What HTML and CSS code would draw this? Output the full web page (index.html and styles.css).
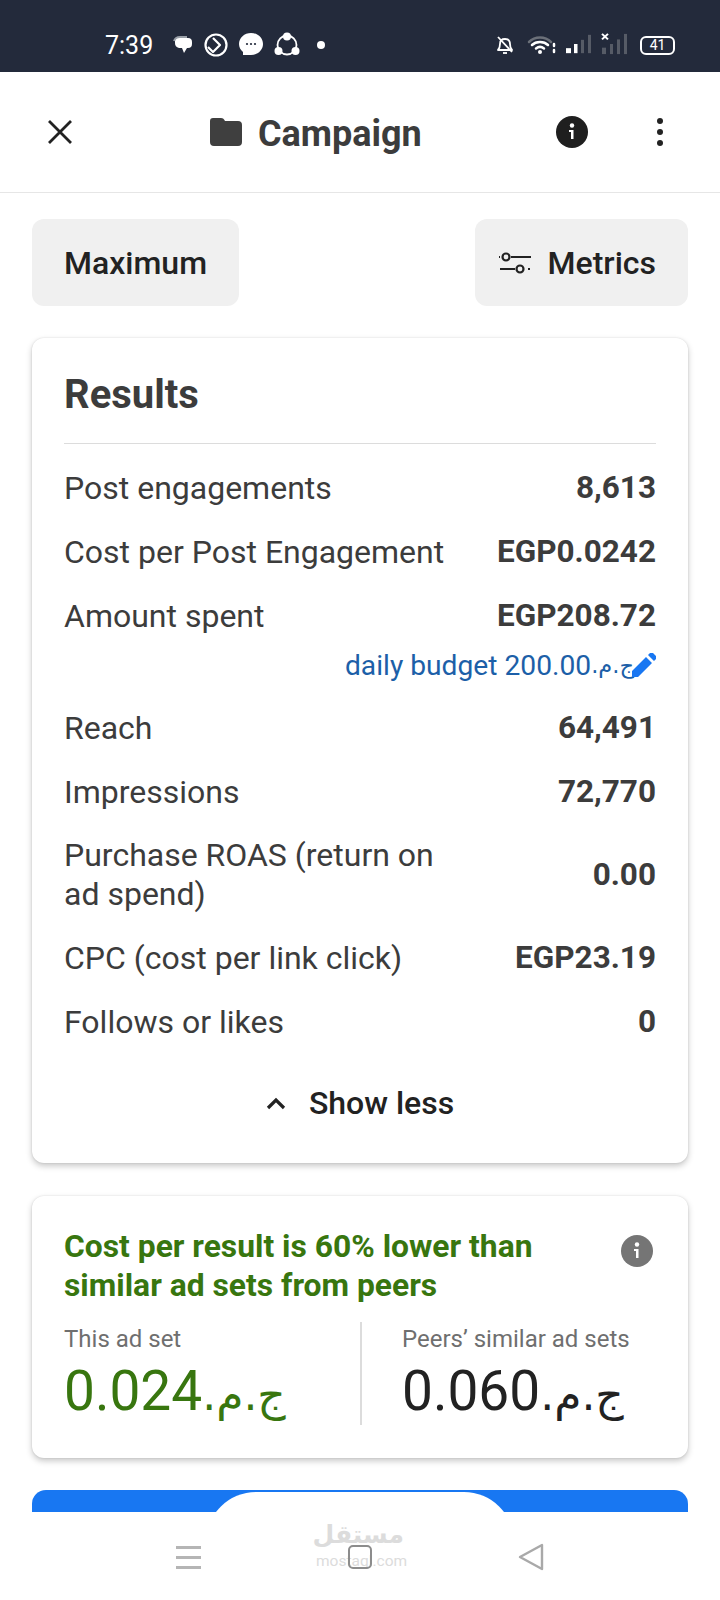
FILE: index.html
```html
<!DOCTYPE html>
<html lang="en">
<head>
    <meta charset="UTF-8">
    <meta name="viewport" content="width=device-width, initial-scale=1.0">
    <title>Campaign</title>
    <link rel="stylesheet" href="styles.css">
</head>
<body>
    <div class="phone">

        <div class="status">
            <span class="clock">7:39</span>
            <div class="status_left">
                <svg width="20" height="20" viewBox="0 0 20 20"><path d="M4 3h11a4 4 0 0 1 4 4v2a4 4 0 0 1-4 4h-1l-3 5-2-5H6a5 5 0 0 1-4-5V6a3 3 0 0 1 2-3z" fill="#fff"/><path d="M1 6c1-3 3-4 6-4h7" stroke="#9aa0a8" stroke-width="2" fill="none"/></svg>
                <svg width="24" height="24" viewBox="0 0 24 24" fill="none" stroke="#fff" stroke-width="2.2"><circle cx="12" cy="12" r="10.5"/><path d="M9 5l7 7-7 7-5-5" stroke-linejoin="round"/></svg>
                <svg width="24" height="26" viewBox="0 0 24 26"><path d="M12 1c6.600 0 12 4.800 12 11s-5.400 11-12 11H4v-3C1.500 18 0 15.200 0 12 0 5.800 5.400 1 12 1z" fill="#fff"/><circle cx="8" cy="12" r="1.100" fill="#232a3b"/><circle cx="12" cy="12" r="1.100" fill="#232a3b"/><circle cx="16" cy="12" r="1.100" fill="#232a3b"/></svg>
                <svg width="26" height="26" viewBox="0 0 26 26" fill="#fff"><circle cx="13" cy="13" r="9.500" fill="none" stroke="#fff" stroke-width="1.800"/><circle cx="13" cy="4.500" r="4"/><circle cx="4.500" cy="19" r="4"/><circle cx="21.500" cy="19" r="4"/></svg>
                <span class="status_dot"></span>
            </div>
            <div class="status_right">
                <svg class="bell" width="18" height="20" viewBox="0 0 18 20" fill="none" stroke="#fff" stroke-width="1.800"><path d="M2 15c2-2 2-4 2-6 0-3 2-5 5-5s5 2 5 5c0 2 0 4 2 6z" stroke-linejoin="round"/><path d="M2 2l14 15"/><path d="M7 18h4"/></svg>
                <svg width="30" height="20" viewBox="0 0 30 20" fill="none" stroke-linecap="round"><path d="M2 7c6-6 16-6 22 0" stroke="#6b7079" stroke-width="2.500"/><path d="M5 10c4-4 12-4 16 0M9 13.500c2.500-2 5.500-2 8 0" stroke="#fff" stroke-width="2.500"/><circle cx="13" cy="17" r="2" fill="#fff"/><path d="M27 9v2M27 15v2" stroke="#fff" stroke-width="2.500"/></svg>
                <svg class="signal" width="28" height="20" viewBox="0 0 28 24" preserveAspectRatio="none"><rect x="1" y="17" width="5" height="6" fill="#fff"/><rect x="9" y="12" width="3.500" height="11" fill="#fff"/><rect x="16" y="7" width="3" height="16" fill="#565b66"/><rect x="23" y="1" width="3" height="22" fill="#565b66"/></svg>
                <svg class="signal" width="28" height="22" viewBox="0 0 28 24" preserveAspectRatio="none"><path d="M1 1l6 6M7 1L1 7" stroke="#fff" stroke-width="2"/><rect x="1" y="16" width="4" height="7" fill="#565b66"/><rect x="9" y="12" width="3" height="11" fill="#565b66"/><rect x="16" y="7" width="3" height="16" fill="#565b66"/><rect x="23" y="1" width="3" height="22" fill="#565b66"/></svg>
                <div class="battery">41</div>
            </div>
        </div>

        <div class="topbar">
            <svg class="close_icon" width="26" height="26" viewBox="0 0 26 26" fill="none" stroke="#222" stroke-width="2.800"><path d="M2 2l22 22M24 2L2 24"/></svg>
            <div class="title">
                <svg width="32" height="28" viewBox="0 0 32 28"><path d="M3 0h8c2 0 3 1 4 3h13a4 4 0 0 1 4 4v17a4 4 0 0 1-4 4H4a4 4 0 0 1-4-4V3a3 3 0 0 1 3-3z" fill="#3f3f3f"/></svg>
                <span class="title_text">Campaign</span>
            </div>
            <svg class="info_icon" width="32" height="32" viewBox="0 0 32 32"><circle cx="16" cy="16" r="16" fill="#1f1f1f"/><circle cx="16" cy="9.500" r="2.200" fill="#fff"/><path d="M13 14h4.500v9H15v-7h-2z" fill="#fff"/></svg>
            <div class="kebab"><i></i><i></i><i></i></div>
        </div>

        <div class="content">
            <div class="filters">
                <div class="chip">Maximum</div>
                <div class="chip chip_metrics">
                    <svg width="32" height="26" viewBox="0 0 32 26" fill="none" stroke="#222" stroke-width="2.200"><path d="M12 7h20M1 19h15"/><circle cx="7" cy="7" r="3.500"/><circle cx="21" cy="19" r="3.500"/><path d="M0 7h1M29 19h2"/></svg>
                    Metrics
                </div>
            </div>

            <div class="card results">
                <h2>Results</h2>
                <div class="row"><span>Post engagements</span><b>8,613</b></div>
                <div class="row"><span>Cost per Post Engagement</span><b>EGP0.0242</b></div>
                <div class="row"><span>Amount spent</span><b>EGP208.72</b></div>
                <div class="budget">daily budget 200.00<bdi dir="rtl" class="arabic">ج.م.</bdi><svg width="24" height="24" viewBox="0 0 24 24" fill="#1877f2"><path d="M0 24v-6L14 4l6 6L6 24zM16 2l2-2c1-.5 2-.5 3 0l3 3c.5 1 .5 2 0 3l-2 2z"/></svg></div>
                <div class="row"><span>Reach</span><b>64,491</b></div>
                <div class="row"><span>Impressions</span><b>72,770</b></div>
                <div class="row row_double"><span class="row_wrap">Purchase ROAS (return on ad spend)</span><b>0.00</b></div>
                <div class="row"><span>CPC (cost per link click)</span><b>EGP23.19</b></div>
                <div class="row"><span>Follows or likes</span><b>0</b></div>
                <div class="show_less">
                    <svg width="20" height="14" viewBox="0 0 20 14" fill="none" stroke="#222" stroke-width="3.200"><path d="M2 12l8-8 8 8"/></svg>
                    Show less
                </div>
            </div>

            <div class="card compare">
                <div class="compare_head">
                    <h3>Cost per result is 60% lower than similar ad sets from peers</h3>
                    <svg width="32" height="32" viewBox="0 0 32 32"><circle cx="16" cy="16" r="16" fill="#757575"/><circle cx="16" cy="9.500" r="2.200" fill="#fff"/><path d="M13 14h4.500v9H15v-7h-2z" fill="#fff"/></svg>
                </div>
                <div class="compare_cols">
                    <div class="col">
                        <div class="col_label">This ad set</div>
                        <div class="col_value green">0.024<bdi dir="rtl" class="arabic">ج.م.</bdi></div>
                    </div>
                    <div class="col col_peers">
                        <div class="col_label">Peers’ similar ad sets</div>
                        <div class="col_value">0.060<bdi dir="rtl" class="arabic">ج.م.</bdi></div>
                    </div>
                </div>
            </div>

            <div class="blue_bar"><div class="blue_notch"></div></div>
        </div>

        <div class="navbar">
            <div class="nav_lines"><i></i><i></i><i></i></div>
            <div class="nav_square"></div>
            <svg width="26" height="28" viewBox="0 0 26 28" fill="none" stroke="#a9a9a9" stroke-width="2.400"><path d="M24 2v24L2 14z" stroke-linejoin="round"/></svg>
            <div class="watermark">
                <div class="wm_ar" dir="rtl">مستقل</div>
                <div class="wm_en">mostaql.com</div>
            </div>
        </div>

    </div>
</body>
</html>
```

FILE: styles.css
```css
*{
    box-sizing: border-box;
}

body{
    margin: 0;
    background: #fff;
    font-family: Roboto, "Noto Sans", sans-serif;
    color: #3c3c3c;
}

.phone{
    width: 720px;
    height: 1600px;
    display: flex;
    flex-direction: column;
    overflow: hidden;
    position: relative;
}

/* status bar */
.status{
    height: 72px;
    flex: none;
    background: #232a3b;
    color: #fff;
    display: flex;
    align-items: center;
    padding: 18px 45px 0 105px;
}

.clock{
    font-size: 25px;
    width: 68px;
}

.status_left{
    display: flex;
    align-items: center;
    gap: 11px;
}

.status_dot{
    width: 8px;
    height: 8px;
    border-radius: 50%;
    background: #fff;
    margin-left: 6px;
}

.status_right{
    display: flex;
    align-items: center;
    gap: 8px;
    margin-left: auto;
}

.bell{
    margin-right: 5px;
}

.signal{
    margin-top: -2px;
}

.battery{
    width: 35px;
    height: 19px;
    border: 2px solid #fff;
    border-radius: 6px;
    font-size: 14px;
    line-height: 15px;
    text-align: center;
    margin-left: 3px;
}

/* top bar */
.topbar{
    height: 121px;
    flex: none;
    border-bottom: 1px solid #e6e6e6;
    display: flex;
    align-items: center;
    padding: 0 57px 0 47px;
    position: relative;
}

.title{
    display: flex;
    align-items: center;
    gap: 16px;
    margin-left: 137px;
    font-size: 36px;
    font-weight: 700;
    color: #3c3c3c;
}

.title_text{
    padding-top: 4px;
}

.info_icon{
    margin-left: auto;
    margin-right: 69px;
}

.kebab{
    display: flex;
    flex-direction: column;
    gap: 5px;
}

.kebab i{
    display: block;
    width: 6px;
    height: 6px;
    border-radius: 50%;
    background: #222;
}

/* page body */
.content{
    flex: 1;
    min-height: 0;
    overflow: hidden;
    padding: 26px 32px 0;
}

.filters{
    display: flex;
    justify-content: space-between;
    margin-bottom: 32px;
}

.chip{
    height: 87px;
    padding: 0 32px;
    border-radius: 12px;
    background: #f0f0f0;
    color: #222;
    font-size: 32px;
    font-weight: 500;
    display: flex;
    align-items: center;
}

.chip_metrics{
    gap: 17px;
    padding-left: 24px;
}

.card{
    background: #fff;
    border-radius: 12px;
    box-shadow: 0 0 2px rgba(0, 0, 0, 0.12), 0 3px 6px rgba(0, 0, 0, 0.22);
    padding: 0 32px;
}

.results{
    height: 825px;
}

.results h2{
    margin: 0 0 12px;
    height: 106px;
    line-height: 114px;
    font-size: 40px;
    font-weight: 700;
    border-bottom: 1px solid #dcdcdc;
}

.row{
    min-height: 64px;
    padding: 13px 0;
    display: flex;
    justify-content: space-between;
    align-items: center;
    font-size: 32px;
    line-height: 38px;
}

.row_double{
    padding: 12px 0;
}

.row_wrap{
    width: 390px;
    line-height: 39px;
}

.row b{
    font-size: 31.500px;
    font-weight: 700;
}

.budget{
    display: flex;
    justify-content: flex-end;
    align-items: center;
    height: 34px;
    margin-bottom: 14px;
    font-size: 28.200px;
    color: #1c5fa8;
}

.budget svg{
    margin-left: -2px;
}

.arabic{
    font-family: "DejaVu Sans", sans-serif;
    font-size: 0.8em;
}

.show_less{
    display: flex;
    justify-content: center;
    align-items: center;
    gap: 23px;
    margin-top: 30px;
    font-size: 32px;
    font-weight: 500;
    color: #222;
}

.compare{
    height: 262px;
    margin-top: 33px;
    padding-top: 31px;
}

.compare_head{
    display: flex;
    justify-content: space-between;
    padding-right: 3px;
}

.compare_head svg{
    flex: none;
    margin-top: 8px;
}

.compare_head h3{
    margin: 0;
    width: 500px;
    font-size: 31.800px;
    line-height: 39px;
    font-weight: 700;
    color: #38760f;
}

.compare_cols{
    display: flex;
    margin-top: 17px;
}

.col{
    flex: none;
    width: 296px;
    height: 103px;
}

.col_peers{
    border-left: 2px solid #dcdcdc;
    padding-left: 40px;
    width: 296px;
}

.col_label{
    font-size: 24px;
    line-height: 30px;
    margin-top: 2px;
    color: #6f6f6f;
}

.col_value{
    font-size: 55px;
    line-height: 60px;
    margin-top: 7px;
    color: #222;
    white-space: nowrap;
}

.col_value.green{
    color: #38760f;
}

.blue_bar{
    height: 40px;
    margin-top: 32px;
    background: #1877f2;
    border-radius: 14px 14px 0 0;
    display: flex;
    justify-content: center;
    padding-top: 2px;
}

.blue_notch{
    width: 308px;
    height: 60px;
    background: #fff;
    border-radius: 50px 50px 0 0;
}

/* bottom nav */
.navbar{
    height: 88px;
    flex: none;
    background: #fff;
    display: flex;
    align-items: center;
    padding: 2px 176px 0;
    justify-content: space-between;
    position: relative;
}

.nav_lines{
    display: flex;
    flex-direction: column;
    gap: 7px;
    width: 25px;
}

.nav_lines i{
    display: block;
    height: 3px;
    background: #b5b5b5;
}

.nav_square{
    width: 24px;
    height: 24px;
    border: 2.500px solid #8c8c8c;
    border-radius: 5px;
    position: relative;
    z-index: 1;
}

.watermark{
    position: absolute;
    left: 316px;
    top: 10px;
    width: 88px;
    text-align: center;
    color: #dcdcdc;
}

.wm_ar{
    font-family: "DejaVu Sans", sans-serif;
    font-size: 25px;
    font-weight: 700;
    line-height: 26px;
}

.wm_en{
    margin-top: 5px;
    font-size: 15.500px;
    line-height: 16px;
}
```
